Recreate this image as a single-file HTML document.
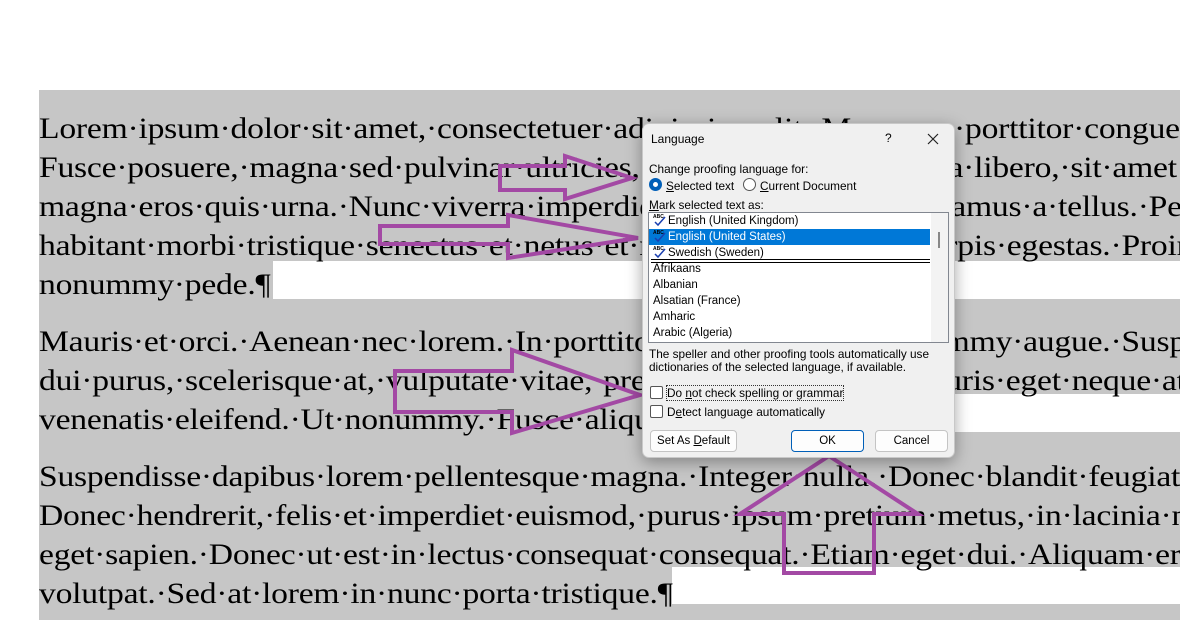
<!DOCTYPE html>
<html><head><meta charset="utf-8"><style>
*{margin:0;padding:0;box-sizing:border-box}
body{width:1180px;height:620px;overflow:hidden;background:#fff;position:relative;font-family:"Liberation Serif",serif}
#clip{position:absolute;left:0;top:0;width:1180px;height:620px;overflow:hidden}
#doc{position:absolute;left:39px;top:90px;width:1141px;height:530px;background:#c6c6c6}
.w{position:absolute;background:#fff}
.l{position:absolute;left:39px;white-space:nowrap;font-size:29.5px;line-height:39px;height:39px;color:#000;letter-spacing:-0.2px;transform:scaleX(1.14);transform-origin:0 0}
#dlg{position:absolute;left:642px;top:123px;width:313px;height:335px;background:#f0f0f0;border:1px solid #c8c8c8;border-radius:7px;box-shadow:0 4px 16px rgba(0,0,0,.35);font-family:"Liberation Sans",sans-serif;font-size:11.8px;color:#000}
#dlg .t{position:absolute;white-space:nowrap}
.rad{position:absolute;width:13px;height:13px;border-radius:50%;border:1px solid #555;background:#fff}
.chk{position:absolute;width:13px;height:13px;border:1px solid #555;border-radius:2px;background:#fff}
.btn{position:absolute;height:22px;border:1px solid #c4c4c4;border-radius:4px;background:#fdfdfd;text-align:center;line-height:20px;font-size:11.5px}
#list{position:absolute;left:5px;top:88px;width:301px;height:131px;border:1px solid #828790;background:#fff;overflow:hidden}
.it{position:absolute;left:0;width:281px;height:16px;line-height:16px;padding-left:4px;white-space:nowrap;font-size:11.5px}
.abc{display:inline-block;width:14px;height:14px;vertical-align:-3px;margin-right:1px}
u{text-decoration:underline}
</style></head><body>
<div id="clip">
<div id="doc"></div>
<div class="w" style="left:273px;top:261px;width:907px;height:38px"></div>
<div class="w" style="left:760px;top:394px;width:420px;height:38px"></div>
<div class="w" style="left:672px;top:567px;width:508px;height:37px"></div>

<div class="l" style="top:110px">Lorem·ipsum·dolor·sit·amet,·consectetuer·adipiscing·elit.·Maecenas·porttitor·congue·massa.</div>
<div class="l" style="top:149px">Fusce·posuere,·magna·sed·pulvinar·ultricies,·purus·lectus·malesuada·libero,·sit·amet·commodo</div>
<div class="l" style="top:188px">magna·eros·quis·urna.·Nunc·viverra·imperdiet·enim.·Fusce·est.·Vivamus·a·tellus.·Pellentesque</div>
<div class="l" style="top:227px">habitant·morbi·tristique·senectus·et·netus·et·malesuada·fames·ac·turpis·egestas.·Proin·pharetra</div>
<div class="l" style="top:266px">nonummy·pede.¶</div>
<div class="l" style="top:323px">Mauris·et·orci.·Aenean·nec·lorem.·In·porttitor.·Donec·laoreet·nonummy·augue.·Suspendisse</div>
<div class="l" style="top:362px">dui·purus,·scelerisque·at,·vulputate·vitae,·pretium·mattis,·nunc.·Mauris·eget·neque·at·sem</div>
<div class="l" style="top:401px">venenatis·eleifend.·Ut·nonummy.·Fusce·aliquet·pede·non·pede.¶</div>
<div class="l" style="top:458px">Suspendisse·dapibus·lorem·pellentesque·magna.·Integer·nulla.·Donec·blandit·feugiat·ligula.</div>
<div class="l" style="top:497px">Donec·hendrerit,·felis·et·imperdiet·euismod,·purus·ipsum·pretium·metus,·in·lacinia·nulla</div>
<div class="l" style="top:536px">eget·sapien.·Donec·ut·est·in·lectus·consequat·consequat.·Etiam·eget·dui.·Aliquam·erat</div>
<div class="l" style="top:575px">volutpat.·Sed·at·lorem·in·nunc·porta·tristique.¶</div>
</div>

<svg style="position:absolute;left:0;top:0" width="1180" height="620">
<g fill="none" stroke="#a349a4" stroke-width="4" stroke-linejoin="miter">
<polygon points="500,166 565,166 565,156 632,178 565,199 565,190 500,190"/>
<polygon points="380,226 508,226 508,215 638,238 508,258 508,244 380,244"/>
<polygon points="395,371 512,371 512,350 640,395 512,433 512,412 395,412"/>
<polygon points="829,456 918,514 874,514 874,573 784,573 784,514 740,514"/>
</g></svg>

<div id="dlg">
<div class="t" style="left:8px;top:8px;font-size:12px">Language</div>
<div class="t" style="left:242px;top:7px;font-size:12px">?</div>
<svg style="position:absolute;left:284px;top:9px" width="12" height="12"><path d="M1 1L11 11M11 1L1 11" stroke="#222" stroke-width="1.2"/></svg>
<div class="t" style="left:6px;top:38px">Change proofing language for:</div>
<div class="rad" style="left:6px;top:54px;border:4px solid #005fb8"></div>
<div class="t" style="left:23px;top:55px"><u>S</u>elected text</div>
<div class="rad" style="left:100px;top:54px"></div>
<div class="t" style="left:117px;top:55px"><u>C</u>urrent Document</div>
<div class="t" style="left:6px;top:74px"><u>M</u>ark selected text as:</div>
<div id="list">
<div class="it" style="top:0"><svg class="abc" viewBox="0 0 14 14"><text x="0" y="5" font-size="5" font-family="Liberation Sans" font-weight="bold">ABC</text><path d="M2 9L5 12L12 4" stroke="#1a3fb0" stroke-width="1.5" fill="none"/></svg>English (United Kingdom)</div>
<div class="it" style="top:16px;background:#0078d7;color:#fff"><svg class="abc" viewBox="0 0 14 14"><text x="0" y="5" font-size="5" font-family="Liberation Sans" font-weight="bold" fill="#000">ABC</text><path d="M2 9L5 12L12 4" stroke="#1a3fb0" stroke-width="1.5" fill="none"/></svg>English (United States)</div>
<div class="it" style="top:32px"><svg class="abc" viewBox="0 0 14 14"><text x="0" y="5" font-size="5" font-family="Liberation Sans" font-weight="bold">ABC</text><path d="M2 9L5 12L12 4" stroke="#1a3fb0" stroke-width="1.5" fill="none"/></svg>Swedish (Sweden)</div>
<div style="position:absolute;left:2px;top:46px;width:279px;height:4px;border-top:1px solid #000;border-bottom:1px solid #000"></div>
<div class="it" style="top:48px">Afrikaans</div>
<div class="it" style="top:64px">Albanian</div>
<div class="it" style="top:80px">Alsatian (France)</div>
<div class="it" style="top:96px">Amharic</div>
<div class="it" style="top:112px">Arabic (Algeria)</div>
<div style="position:absolute;right:0;top:0;width:17px;height:129px;background:#f3f3f3"></div>
<div style="position:absolute;right:8px;top:19px;width:2px;height:16px;background:#888"></div>
</div>
<div class="t" style="left:6px;top:224px;line-height:13px">The speller and other proofing tools automatically use<br>dictionaries of the selected language, if available.</div>
<div class="chk" style="left:7px;top:262px"></div>
<div class="t" style="left:24px;top:262px;outline:1px dotted #333">Do <u>n</u>ot check spelling or grammar</div>
<div class="chk" style="left:7px;top:281px"></div>
<div class="t" style="left:24px;top:281px">D<u>e</u>tect language automatically</div>
<div class="btn" style="left:7px;top:306px;width:87px">Set As <u>D</u>efault</div>
<div class="btn" style="left:148px;top:306px;width:73px;border-color:#005fb8">OK</div>
<div class="btn" style="left:232px;top:306px;width:73px">Cancel</div>
</div>
</body></html>
